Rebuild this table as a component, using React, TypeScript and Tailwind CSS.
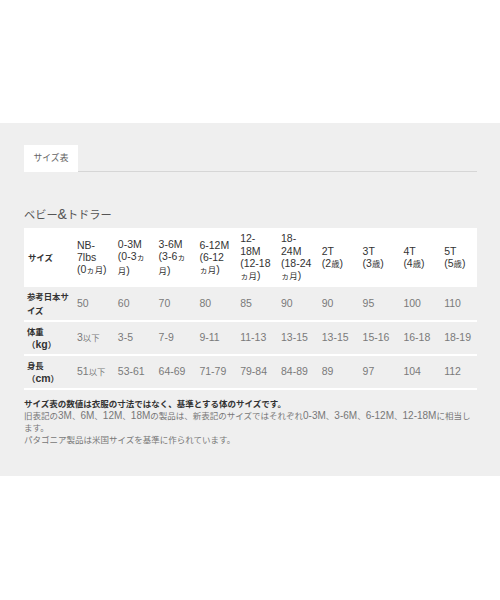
import React from "react";

const CJK = /([\u3000-\u30ff\u4e00-\u9fff\uff00-\uffef]+)/;

function J({ t, c = "text-[0.8em]" }: { t: string; c?: string }) {
  return (
    <>
      {t.split(CJK).map((s, i) =>
        i % 2 === 1 ? (
          <span key={i} className={c}>
            {s}
          </span>
        ) : (
          <React.Fragment key={i}>{s}</React.Fragment>
        )
      )}
    </>
  );
}

const cols: string[][] = [
  ["NB-", "7lbs", "(0ヵ月)"],
  ["0-3M", "(0-3ヵ", "月)"],
  ["3-6M", "(3-6ヵ", "月)"],
  ["6-12M", "(6-12", "ヵ月)"],
  ["12-", "18M", "(12-18", "ヵ月)"],
  ["18-", "24M", "(18-24", "ヵ月)"],
  ["2T", "(2歳)"],
  ["3T", "(3歳)"],
  ["4T", "(4歳)"],
  ["5T", "(5歳)"],
];

const rows: { label: string[]; vals: string[] }[] = [
  {
    label: ["参考日本サ", "イズ"],
    vals: ["50", "60", "70", "80", "85", "90", "90", "95", "100", "110"],
  },
  {
    label: ["体重", "（kg）"],
    vals: ["3以下", "3-5", "7-9", "9-11", "11-13", "13-15", "13-15", "15-16", "16-18", "18-19"],
  },
  {
    label: ["身長", "（cm）"],
    vals: ["51以下", "53-61", "64-69", "71-79", "79-84", "84-89", "89", "97", "104", "112"],
  },
];

export default function App() {
  return (
    <div className="w-[500px] h-[600px] bg-white font-['Liberation_Sans','Noto_Sans_CJK_JP',sans-serif]">
      <div className="h-[123px]" />
      <div className="bg-[#efefef] h-[353px] px-[24px] pt-[22px]">
        <div className="w-[453px] flex border-b border-[#d6d6d6]">
          <div className="bg-white h-[27px] -mb-px px-[9.5px] flex items-center text-[11px] text-[#666]">
            <J t="サイズ表" />
          </div>
        </div>

        <div className="mt-[34px] text-[14px] leading-[16px] text-[#555]">
          <J t="ベビー&トドラー" />
        </div>

        <table className="mt-[5px] w-[453px] table-fixed border-collapse text-[10.5px]">
          <colgroup>
            <col className="w-[49px]" />
            <col className="w-[40.8px]" />
            <col className="w-[40.8px]" />
            <col className="w-[40.8px]" />
            <col className="w-[40.8px]" />
            <col className="w-[40.8px]" />
            <col className="w-[40.8px]" />
            <col className="w-[40.8px]" />
            <col className="w-[40.8px]" />
            <col className="w-[40.8px]" />
            <col />
          </colgroup>
          <thead>
            <tr className="bg-white h-[59px]">
              <th className="pl-[4px] text-left align-middle font-bold text-[#333] leading-[12.3px]">
                <J t="サイズ" />
              </th>
              {cols.map((c, i) => (
                <th
                  key={i}
                  className="pl-[4px] text-left align-middle font-normal text-[#333] leading-[12.3px]"
                >
                  {c.map((l, j) => (
                    <div key={j} className="whitespace-nowrap">
                      <J t={l} />
                    </div>
                  ))}
                </th>
              ))}
            </tr>
          </thead>
          <tbody>
            {rows.map((r, i) => (
              <tr key={i} className="h-[34px] border-b-2 border-white">
                <td className="pl-[3px] align-middle font-bold text-[#333] leading-[12.5px]">
                  {r.label.map((l, j) => (
                    <div key={j} className="whitespace-nowrap">
                      <J t={l} />
                    </div>
                  ))}
                </td>
                {r.vals.map((v, j) => (
                  <td key={j} className="pl-[4px] align-middle text-[#7a7a7a] whitespace-nowrap">
                    <J t={v} />
                  </td>
                ))}
              </tr>
            ))}
          </tbody>
        </table>

        <div className="mt-[8px] text-[10px] leading-[12px] text-[#777]">
          <div className="font-bold text-[#333] whitespace-nowrap">
            <J t="サイズ表の数値は衣服の寸法ではなく、基準とする体のサイズです。" c="text-[0.85em]" />
          </div>
          <div className="whitespace-nowrap">
            <J
              t="旧表記の3M、6M、12M、18Mの製品は、新表記のサイズではそれぞれ0-3M、3-6M、6-12M、12-18Mに相当し"
              c="text-[0.85em]"
            />
          </div>
          <div>
            <J t="ます。" c="text-[0.85em]" />
          </div>
          <div className="whitespace-nowrap">
            <J t="パタゴニア製品は米国サイズを基準に作られています。" c="text-[0.85em]" />
          </div>
        </div>
      </div>
    </div>
  );
}
